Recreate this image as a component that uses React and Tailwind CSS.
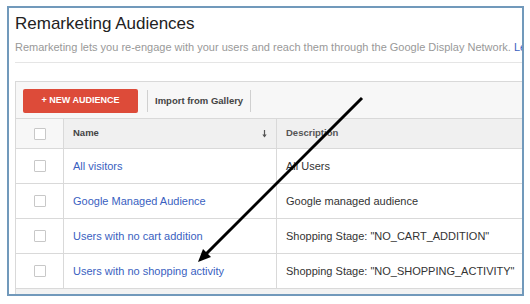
const rows = [
  { name: 'All visitors', desc: 'All Users' },
  { name: 'Google Managed Audience', desc: 'Google managed audience' },
  { name: 'Users with no cart addition', desc: 'Shopping Stage: "NO_CART_ADDITION"' },
  { name: 'Users with no shopping activity', desc: 'Shopping Stage: "NO_SHOPPING_ACTIVITY"' },
];

const Checkbox = () => (
  <div className="w-[12px] h-[12px] border border-[#c8c8c8] bg-white rounded-[1px]" />
);

const App = () => {
  return (
    <div className="relative w-[530px] h-[304px] bg-white overflow-hidden font-['Liberation_Sans',Arial,sans-serif]">
      <div className="ml-[7px] mt-[6px] w-[517px] h-[290px] border-2 border-[#7199bb] overflow-hidden">
        <div className="pl-[6px] pt-[6px]">
          <h1 className="text-[17px] leading-[20px] text-[#222]">Remarketing Audiences</h1>
          <p className="mt-[6px] text-[11px] leading-[14px] text-[#999] whitespace-nowrap">
            Remarketing lets you re-engage with your users and reach them through the Google Display Network.{' '}
            <span className="text-[#3a5fbf]">Learn more</span>
          </p>
          <div className="mt-[8px] h-px w-[600px] bg-[#e5e5e5]" />

          <div className="mt-[18px] w-[600px] border border-[#d9d9d9]">
            {/* toolbar */}
            <div className="h-[37px] flex items-start pt-[7px] pl-[7px] bg-[#f7f7f7] border-b border-[#d9d9d9]">
              <button className="w-[115px] h-[24px] bg-[#dd4b39] rounded-[2px] text-white text-[9px] font-bold">
                + NEW AUDIENCE
              </button>
              <div className="ml-[9px] mt-[1px] w-px h-[22px] bg-[#d0d0d0]" />
              <span className="ml-[7px] h-[24px] flex items-center text-[9.5px] font-bold text-[#444]">
                Import from Gallery
              </span>
              <div className="ml-[7px] mt-[1px] w-px h-[22px] bg-[#d0d0d0]" />
            </div>

            {/* header */}
            <div className="h-[30px] flex border-b border-[#d9d9d9] text-[9.5px] font-bold text-[#444]">
              <div className="w-[48px] flex items-center justify-center bg-[#f7f7f7] border-r border-[#d9d9d9]">
                <Checkbox />
              </div>
              <div className="w-[213px] flex items-center justify-between pl-[9px] pr-[9px] bg-[#f0f0f0] border-r border-[#d9d9d9]">
                <span>Name</span>
                <svg width="5" height="8" viewBox="0 0 5 8">
                  <path d="M2.5 0v6" stroke="#555" strokeWidth="1.2" />
                  <path d="M0.3 4.6L2.5 7.6L4.7 4.6Z" fill="#555" />
                </svg>
              </div>
              <div className="flex-1 flex items-center pl-[9px] bg-[#f0f0f0] text-[#555]">Description</div>
            </div>

            {/* rows */}
            {rows.map((r) => (
              <div key={r.name} className="h-[35px] flex border-b border-[#d9d9d9] text-[11px]">
                <div className="w-[48px] flex items-center justify-center border-r border-[#d9d9d9]">
                  <Checkbox />
                </div>
                <div className="w-[213px] flex items-center pl-[9px] border-r border-[#d9d9d9] text-[#3a5fbf]">
                  {r.name}
                </div>
                <div className="flex-1 flex items-center pl-[9px] text-[#333]">{r.desc}</div>
              </div>
            ))}

            <div className="h-[12px] bg-[#f2f2f2]" />
          </div>
        </div>
      </div>

      {/* annotation arrow */}
      <svg className="absolute inset-0 pointer-events-none" width="530" height="304">
        <line x1="362" y1="98" x2="205" y2="255" stroke="#000" strokeWidth="3" />
        <polygon points="198,262 211,257 203,249" fill="#000" />
      </svg>
    </div>
  );
};

export default App;
